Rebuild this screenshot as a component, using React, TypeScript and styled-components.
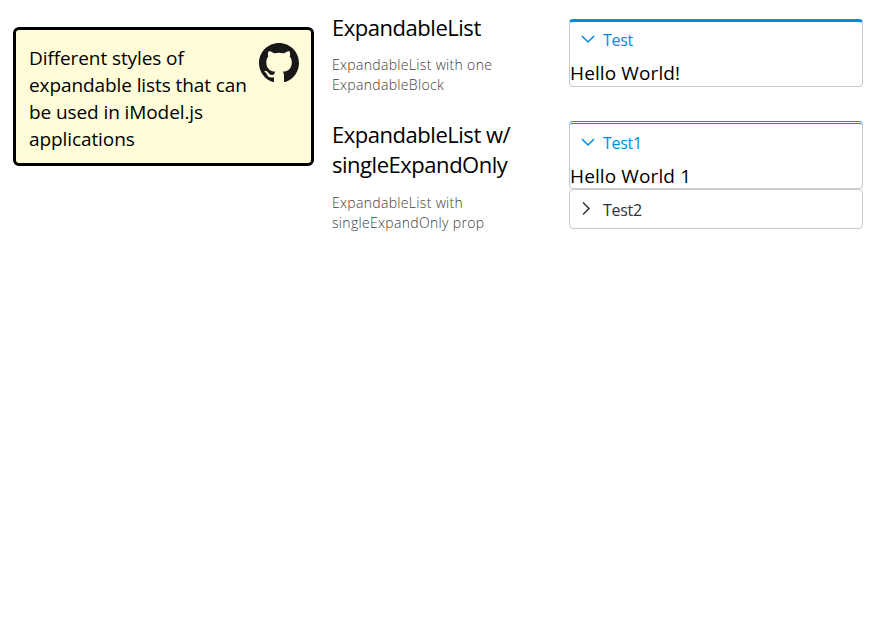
import React, { useState } from "react";
import styled, { createGlobalStyle } from "styled-components";

const Global = createGlobalStyle`
  *, *::before, *::after { box-sizing: border-box; }
  body { margin: 0; background: #fff; color: #000; font-family: "Segoe UI", "Open Sans", "Noto Sans", sans-serif; font-weight: 400; }
  h2, p { margin: 0; font-weight: 400; }
`;

const Page = styled.main`
  display: grid;
  grid-template-columns: 301px 219px 294px;
  column-gap: 18px;
  align-items: start;
  padding-left: 13px;
`;

const Note = styled.aside`
  display: flex;
  justify-content: space-between;
  height: 139px;
  margin-top: 27px;
  padding: 15px 12px 0 13px;
  border: 3px solid #000;
  border-radius: 6px;
  background: #fffcd9;
`;

const NoteText = styled.p`
  font-size: 19px;
  line-height: 27px;
  white-space: nowrap;
  letter-spacing: -0.09px;
`;

const GitHubMark = styled.svg`
  flex: none;
  width: 40px;
  height: 40px;
  margin-top: -2px;
  fill: #191717;
`;

const Descriptions = styled.section`
  display: flex;
  flex-direction: column;
  gap: 23.6px;
  padding-top: 12px;
`;

const Title = styled.h2`
  font-size: 22px;
  line-height: 30.4px;
  white-space: nowrap;
  letter-spacing: -0.47px;
`;

const Detail = styled.p`
  margin-top: 13px;
  color: #3c3c3c;
  font-size: 14px;
  font-weight: 300;
  line-height: 20px;
  letter-spacing: 0.32px;
  white-space: nowrap;
`;

const Examples = styled.section`
  display: flex;
  flex-direction: column;
  gap: 34px;
  padding-top: 19px;
`;

const List = styled.div`
  display: flex;
  flex-direction: column;
`;

const Block = styled.div<{ $top: string; $height: number }>`
  height: ${(p) => p.$height}px;
  border: 1px solid #c7ccd1;
  border-top: ${(p) => p.$top};
  border-radius: 4px;
`;

const BlockHeader = styled.button<{ $open: boolean; $inset: string }>`
  display: flex;
  align-items: center;
  gap: 8px;
  width: 100%;
  height: 38px;
  padding: ${(p) => p.$inset};
  border: 0;
  background: none;
  color: ${(p) => (p.$open ? "#008be1" : "#333")};
  font: 400 16px/22px "Segoe UI", "Open Sans", "Noto Sans", sans-serif;
  letter-spacing: -0.3px;
  text-align: left;
`;

const Chevron = styled.svg<{ $open: boolean }>`
  width: 14px;
  height: 14px;
  fill: none;
  stroke: currentColor;
  stroke-width: 1.5;
  transform: ${(p) => (p.$open ? "translateY(-1px) rotate(90deg)" : "translate(-2px, -1.5px)")};
`;

const BlockBody = styled.div<{ $offset: number }>`
  margin-top: ${(p) => p.$offset}px;
  font-size: 19px;
  line-height: 27px;
  letter-spacing: 0.12px;
`;

type ItemProps = {
  title: string;
  body: string;
  open: boolean;
  top: string;
  height: number;
  inset: string;
  offset: number;
  onToggle: () => void;
};

function Item({ title, body, open, top, height, inset, offset, onToggle }: ItemProps) {
  return (
    <Block $top={top} $height={height}>
      <BlockHeader $open={open} $inset={inset} onClick={onToggle}>
        <Chevron $open={open} viewBox="0 0 14 14"><path d="M4 1l6 6-6 6" /></Chevron>
        <span>{title}</span>
      </BlockHeader>
      {open && <BlockBody $offset={offset}>{body}</BlockBody>}
    </Block>
  );
}

export default function App() {
  const [firstOpen, setFirstOpen] = useState(true);
  const [active, setActive] = useState(0);
  const entries = [
    { title: "Test1", body: "Hello World 1" },
    { title: "Test2", body: "Hello World 2" },
  ];
  return (
    <>
      <Global />
      <Page>
        <Note>
          <NoteText>
            Different styles of<br />expandable lists that can<br />be used in iModel.js<br />applications
          </NoteText>
          <GitHubMark viewBox="0 0 16 16" aria-label="GitHub">
            <path d="M8 0C3.58 0 0 3.58 0 8c0 3.54 2.29 6.53 5.47 7.59.4.07.55-.17.55-.38 0-.19-.01-.82-.01-1.49-2.01.37-2.53-.49-2.69-.94-.09-.23-.48-.94-.82-1.13-.28-.15-.68-.52-.01-.53.63-.01 1.08.58 1.23.82.72 1.21 1.87.87 2.33.66.07-.52.28-.87.51-1.07-1.78-.2-3.64-.89-3.64-3.95 0-.87.31-1.59.82-2.15-.08-.2-.36-1.02.08-2.12 0 0 .67-.21 2.2.82.64-.18 1.32-.27 2-.27s1.36.09 2 .27c1.53-1.04 2.2-.82 2.2-.82.44 1.1.16 1.92.08 2.12.51.56.82 1.27.82 2.15 0 3.07-1.87 3.75-3.65 3.95.29.25.54.73.54 1.48 0 1.07-.01 1.93-.01 2.2 0 .21.15.46.55.38A8.01 8.01 0 0 0 16 8c0-4.42-3.58-8-8-8z" />
          </GitHubMark>
        </Note>
        <Descriptions>
          <div>
            <Title>ExpandableList</Title>
            <Detail>ExpandableList with one<br />ExpandableBlock</Detail>
          </div>
          <div>
            <Title>ExpandableList w/<br />singleExpandOnly</Title>
            <Detail>ExpandableList with<br />singleExpandOnly prop</Detail>
          </div>
        </Descriptions>
        <Examples>
          <List>
            <Item
              title="Test"
              body="Hello World!"
              open={firstOpen}
              top="3px solid #008be1"
              height={firstOpen ? 68 : 40}
              inset="0 0 2px 11px"
              offset={0}
              onToggle={() => setFirstOpen(!firstOpen)}
            />
          </List>
          <List>
            {entries.map((e, i) => (
              <Item
                key={e.title}
                {...e}
                open={active === i}
                top={active === i ? "3px double #008be1" : "1px solid #c7ccd1"}
                height={active === i ? 68 : 40}
                inset={active === i ? "0 0 0 11px" : "2px 0 0 11px"}
                offset={1}
                onToggle={() => setActive(active === i ? -1 : i)}
              />
            ))}
          </List>
        </Examples>
      </Page>
    </>
  );
}
